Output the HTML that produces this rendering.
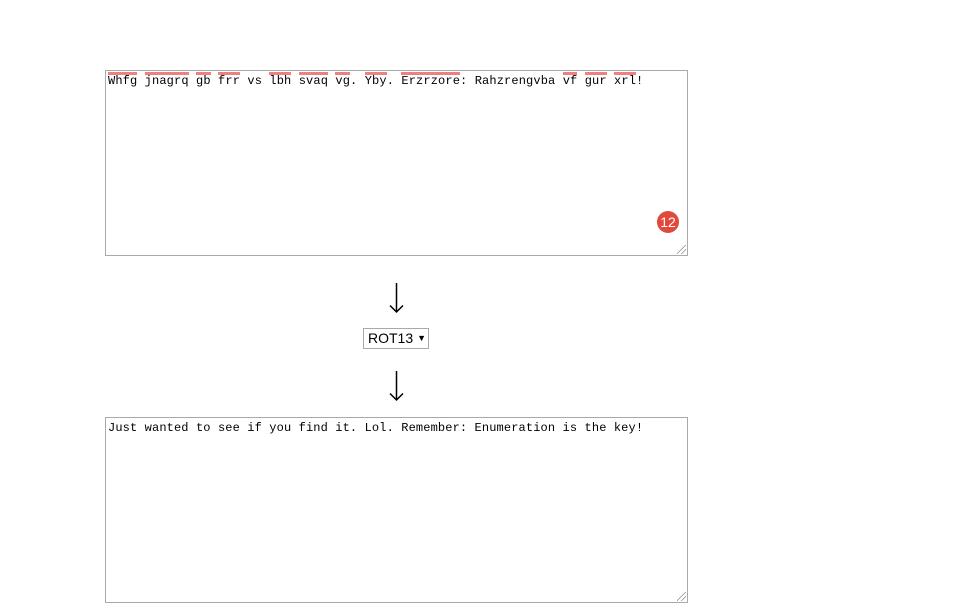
<!DOCTYPE html>
<html><head><style>
body{margin:0;background:#fff;width:962px;height:614px;position:relative;overflow:hidden;font-family:"Liberation Sans",sans-serif}
.ta{position:absolute;left:105px;width:581px;height:184px;border:1px solid #a9a9a9;background:#fff}
.txt{position:absolute;left:2px;top:3px;font:12px/14px "Liberation Mono",monospace;white-space:pre;color:#000;letter-spacing:0.13px}
.m{position:relative}
.m::before{content:"";position:absolute;left:0;right:0;top:-2px;height:3px;background:#f08080}
.grip{position:absolute;right:1px;bottom:1px;width:9px;height:9px;background:linear-gradient(135deg,transparent 45%,#888 45%,#888 52%,transparent 52%,transparent 70%,#888 70%,#888 77%,transparent 77%)}
.badge{position:absolute;left:551px;top:140px;width:22px;height:22px;border-radius:50%;background:#e0493b;color:#fff;font-size:14px;line-height:22px;text-align:center}
.arrow{position:absolute;left:388px}
.sel{position:absolute;left:363px;top:328px;width:64px;height:19px;border:1px solid #a9a9a9;font-size:14px;line-height:19px;box-sizing:content-box}
</style></head><body>
<div class="ta" style="top:70px"><div class="txt"><span class="m">Whfg</span> <span class="m">jnagrq</span> <span class="m">gb</span> <span class="m">frr</span> vs <span class="m">lbh</span> <span class="m">svaq</span> <span class="m">vg</span>. <span class="m">Yby</span>. <span class="m">Erzrzore</span>: Rahzrengvba <span class="m">vf</span> <span class="m">gur</span> <span class="m">xrl</span>!</div><div class="badge">12</div><div class="grip"></div></div>
<svg class="arrow" style="top:282px" width="18" height="32"><path d="M8.5 1V30M2 23.5L8.5 30L15 23.5" stroke="#000" stroke-width="1.5" fill="none"/></svg>
<div class="sel"><span style="margin-left:4px">ROT13</span><span style="font-size:9px;margin-left:4px;position:relative;top:-2px">▼</span></div>
<svg class="arrow" style="top:370px" width="18" height="32"><path d="M8.5 1V30M2 23.5L8.5 30L15 23.5" stroke="#000" stroke-width="1.5" fill="none"/></svg>
<div class="ta" style="top:417px"><div class="txt">Just wanted to see if you find it. Lol. Remember: Enumeration is the key!</div><div class="grip"></div></div>
</body></html>
